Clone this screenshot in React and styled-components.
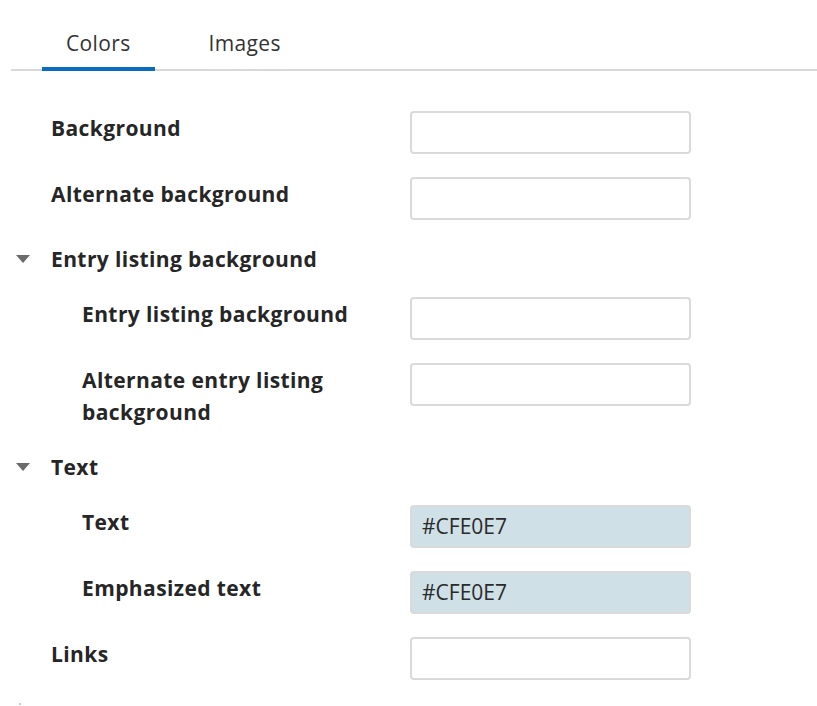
import React from 'react'
import styled, { createGlobalStyle } from 'styled-components'

const GlobalStyle = createGlobalStyle`
  body {
    margin: 0;
    background: #ffffff;
    font-family: "Open Sans", "Noto Sans", sans-serif;
    color: #262626;
  }
`

const Page = styled.div`
  width: 817px;
  height: 706px;
  overflow: hidden;
  padding-top: 23px;
  box-sizing: border-box;
`

const TabBar = styled.div`
  display: flex;
  margin-left: 11px;
  padding-left: 31px;
  border-bottom: 2px solid #d9d9d9;
`

const Tab = styled.div`
  padding: 0 ${({ active }) => (active ? '24px' : '0')};
  height: 48px;
  line-height: 40px;
  font-size: 21px;
  letter-spacing: 0.35px;
  color: #333;
  margin-bottom: -2px;
  border-bottom: 4px solid ${({ active }) => (active ? '#0a6cc0' : 'transparent')};
  box-sizing: border-box;
  margin-right: ${({ active }) => (active ? '54px' : '0')};
`

const Form = styled.div`
  padding-top: 40px;
  padding-left: 51px;
`

const Row = styled.div`
  display: flex;
  align-items: flex-start;
  margin-bottom: 23px;
  padding-left: ${({ nested }) => (nested ? '31px' : '0')};
`

const Label = styled.div`
  width: ${({ nested }) => (nested ? '328px' : '359px')};
  padding-right: 30px;
  box-sizing: border-box;
  margin-top: 1px;
  font-size: 21px;
  font-weight: 700;
  letter-spacing: 0.4px;
  line-height: 32px;
`

const Field = styled.div`
  width: 281px;
  height: 43px;
  box-sizing: border-box;
  border: 2px solid #dadada;
  border-radius: 4px;
  background: ${({ filled }) => (filled ? '#cfe0e7' : '#fff')};
  padding-left: 10px;
  font-size: 21px;
  line-height: 39px;
  color: #2a2a2a;
`

const SectionHeader = styled.div`
  display: flex;
  align-items: center;
  margin-left: -51px;
  margin-bottom: 22px;
  height: 32px;
  font-size: 21px;
  font-weight: 700;
  letter-spacing: 0.4px;
`

const Caret = styled.span`
  width: 0;
  height: 0;
  margin-left: 16px;
  margin-right: 21px;
  border-left: 7px solid transparent;
  border-right: 7px solid transparent;
  border-top: 8px solid #6b6b6b;
`

const Dot = styled.div`
  width: 2px;
  height: 2px;
  margin: 20px 0 0 -32px;
  background: #c8c8c8;
`

function FieldRow({ label, value, nested }) {
  return (
    <Row nested={nested}>
      <Label nested={nested}>{label}</Label>
      <Field filled={!!value}>{value}</Field>
    </Row>
  )
}

export default function App() {
  return (
    <Page>
      <GlobalStyle />
      <TabBar>
        <Tab active>Colors</Tab>
        <Tab>Images</Tab>
      </TabBar>
      <Form>
        <FieldRow label="Background" />
        <FieldRow label="Alternate background" />
        <SectionHeader>
          <Caret />
          Entry listing background
        </SectionHeader>
        <FieldRow nested label="Entry listing background" />
        <FieldRow nested label="Alternate entry listing background" />
        <SectionHeader>
          <Caret />
          Text
        </SectionHeader>
        <FieldRow nested label="Text" value="#CFE0E7" />
        <FieldRow nested label="Emphasized text" value="#CFE0E7" />
        <FieldRow label="Links" />
        <Dot />
      </Form>
    </Page>
  )
}
